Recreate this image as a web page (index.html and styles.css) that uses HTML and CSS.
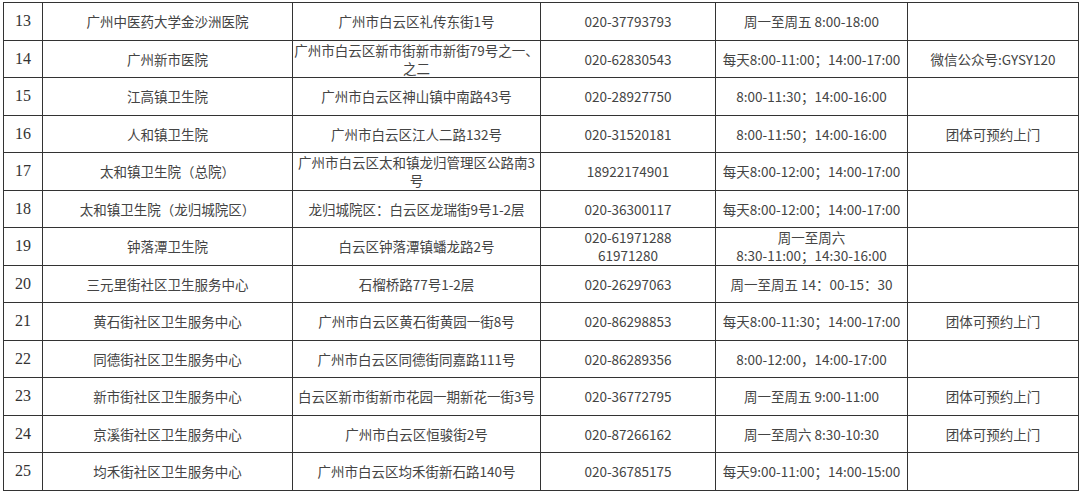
FILE: index.html
```html
<!DOCTYPE html>
<html lang="zh-CN">
<head>
<meta charset="utf-8">
<title>医院列表</title>
<link rel="stylesheet" href="styles.css">
</head>
<body>
<table class="list">
  <colgroup>
    <col class="c-no"><col class="c-name"><col class="c-addr"><col class="c-tel"><col class="c-time"><col class="c-note">
  </colgroup>
  <tbody>
    <tr><td class="no">13</td><td>广州中医药大学金沙洲医院</td><td>广州市白云区礼传东街1号</td><td>020-37793793</td><td>周一至周五 8:00-18:00</td><td></td></tr>
    <tr><td class="no">14</td><td>广州新市医院</td><td>广州市白云区新市街新市新街79号之一、<br>之二</td><td>020-62830543</td><td>每天8:00-11:00；14:00-17:00</td><td>微信公众号:GYSY120</td></tr>
    <tr><td class="no">15</td><td>江高镇卫生院</td><td>广州市白云区神山镇中南路43号</td><td>020-28927750</td><td>8:00-11:30；14:00-16:00</td><td></td></tr>
    <tr><td class="no">16</td><td>人和镇卫生院</td><td>广州市白云区江人二路132号</td><td>020-31520181</td><td>8:00-11:50；14:00-16:00</td><td>团体可预约上门</td></tr>
    <tr><td class="no">17</td><td>太和镇卫生院（总院）</td><td>广州市白云区太和镇龙归管理区公路南3<br>号</td><td>18922174901</td><td>每天8:00-12:00；14:00-17:00</td><td></td></tr>
    <tr><td class="no">18</td><td>太和镇卫生院（龙归城院区）</td><td>龙归城院区：白云区龙瑞街9号1-2层</td><td>020-36300117</td><td>每天8:00-12:00；14:00-17:00</td><td></td></tr>
    <tr><td class="no">19</td><td>钟落潭卫生院</td><td>白云区钟落潭镇蟠龙路2号</td><td>020-61971288<br>61971280</td><td>周一至周六<br>8:30-11:00；14:30-16:00</td><td></td></tr>
    <tr><td class="no">20</td><td>三元里街社区卫生服务中心</td><td>石榴桥路77号1-2层</td><td>020-26297063</td><td>周一至周五 14：00-15：30</td><td></td></tr>
    <tr><td class="no">21</td><td>黄石街社区卫生服务中心</td><td>广州市白云区黄石街黄园一街8号</td><td>020-86298853</td><td>每天8:00-11:30；14:00-17:00</td><td>团体可预约上门</td></tr>
    <tr><td class="no">22</td><td>同德街社区卫生服务中心</td><td>广州市白云区同德街同嘉路111号</td><td>020-86289356</td><td>8:00-12:00，14:00-17:00</td><td></td></tr>
    <tr><td class="no">23</td><td>新市街社区卫生服务中心</td><td>白云区新市街新市花园一期新花一街3号</td><td>020-36772795</td><td>周一至周五 9:00-11:00</td><td>团体可预约上门</td></tr>
    <tr><td class="no">24</td><td>京溪街社区卫生服务中心</td><td>广州市白云区恒骏街2号</td><td>020-87266162</td><td>周一至周六 8:30-10:30</td><td>团体可预约上门</td></tr>
    <tr><td class="no">25</td><td>均禾街社区卫生服务中心</td><td>广州市白云区均禾街新石路140号</td><td>020-36785175</td><td>每天9:00-11:00；14:00-15:00</td><td></td></tr>
  </tbody>
</table>
</body>
</html>
```

FILE: styles.css
```css
html, body {
  margin: 0;
  padding: 0;
  background: #ffffff;
}
body {
  padding: 2px 0 0 3px;
  overflow: hidden;
}
.list {
  border-collapse: collapse;
  table-layout: fixed;
  width: 1075px;
  font-family: "Noto Sans CJK SC", sans-serif;
  font-size: 13.5px;
  color: #444;
  border-top: 1px solid #888;
  border-left: 1px solid #aaa;
}
.c-no { width: 39px; }
.c-name { width: 250px; }
.c-addr { width: 248px; }
.c-tel { width: 175px; }
.c-time { width: 192px; }
.c-note { width: 171px; }
.list tr {
  height: 37.5px;
}
.list td {
  border: 1px solid #333;
  padding: 0;
  text-align: center;
  vertical-align: middle;
  line-height: 18px;
  white-space: nowrap;
  overflow: hidden;
}
.list td.no {
  font-family: "Liberation Serif", serif;
  font-size: 16px;
  color: #333;
}
```
